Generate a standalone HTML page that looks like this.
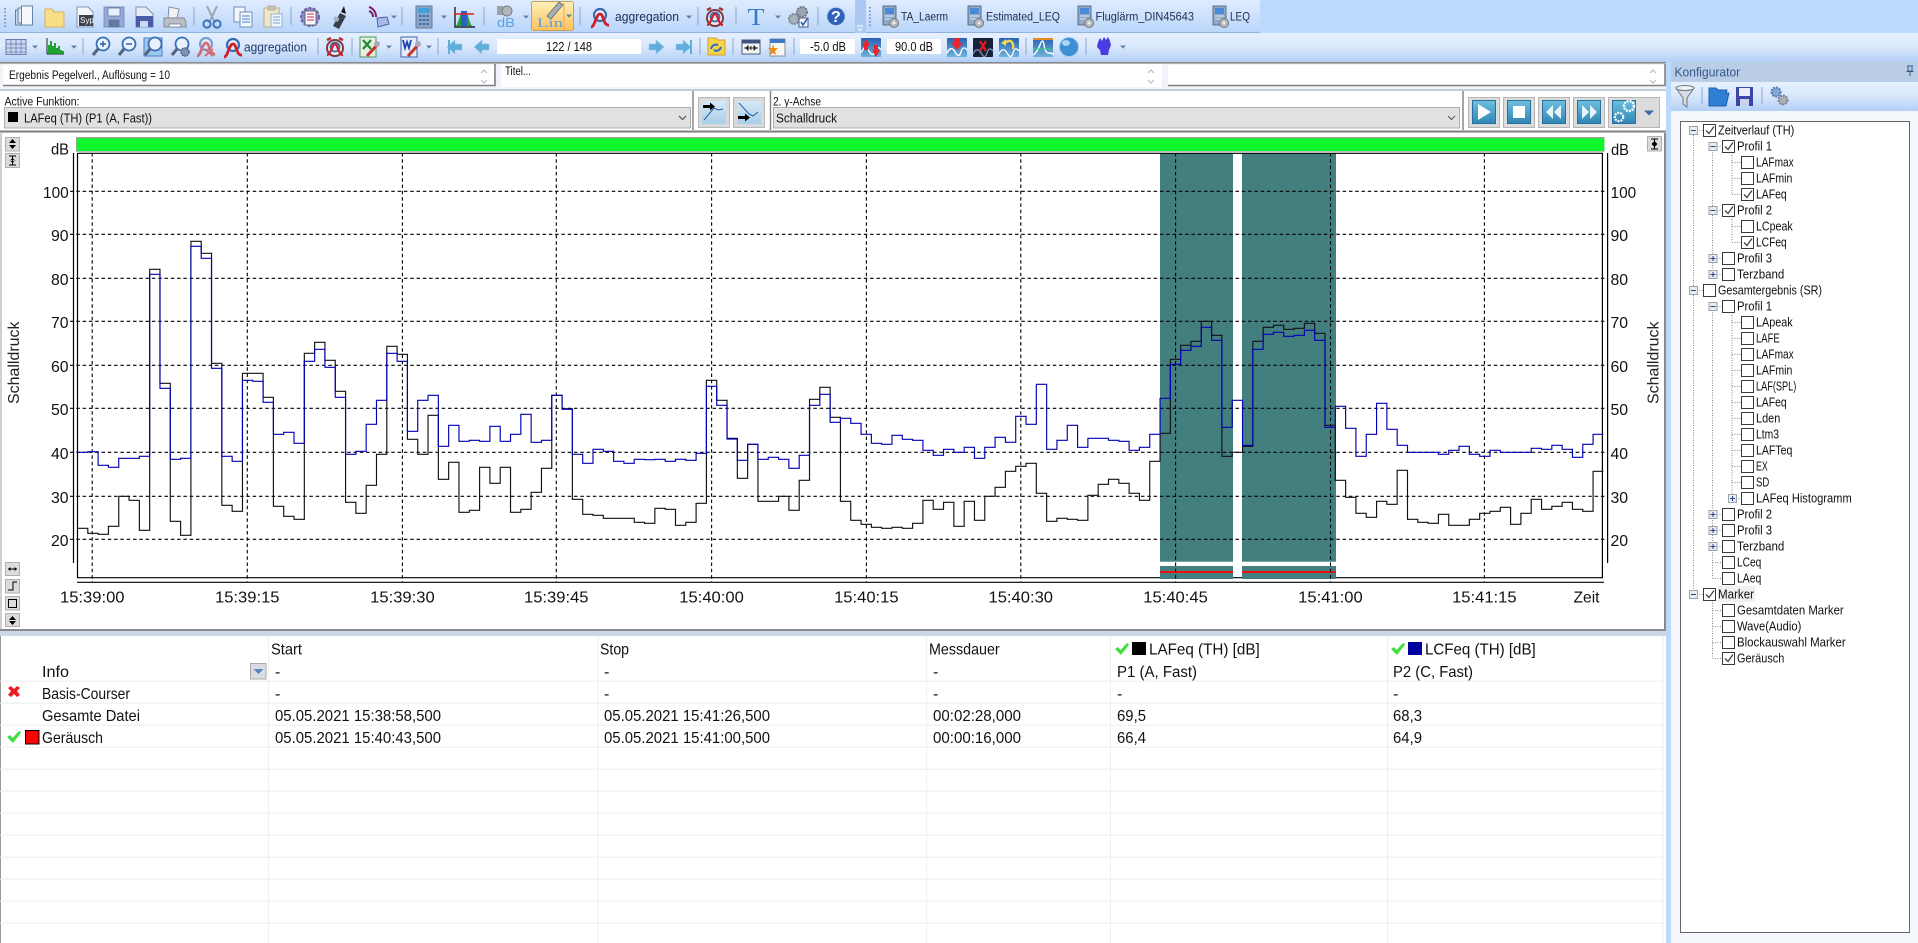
<!DOCTYPE html>
<html lang="de">
<head>
<meta charset="utf-8">
<title>Messdaten-Analyse</title>
<style>
html,body{margin:0;padding:0;width:1918px;height:943px;overflow:hidden;background:#fff}
svg{display:block;font-family:"Liberation Sans",sans-serif}
</style>
</head>
<body>
<svg width="1918" height="943" viewBox="0 0 1918 943" xmlns="http://www.w3.org/2000/svg">
<defs>
<linearGradient id="g1" x1="0" y1="0" x2="0" y2="1"><stop offset="0" stop-color="#e0ecfe"/><stop offset="1" stop-color="#b9d5fa"/></linearGradient>
<linearGradient id="g2" x1="0" y1="0" x2="0" y2="1"><stop offset="0" stop-color="#e6f0fe"/><stop offset=".45" stop-color="#dbe9fd"/><stop offset="1" stop-color="#b3cff6"/></linearGradient>
<linearGradient id="go" x1="0" y1="0" x2="0" y2="1"><stop offset="0" stop-color="#fff0b8"/><stop offset="1" stop-color="#fbc25e"/></linearGradient>
<linearGradient id="gb" x1="0" y1="0" x2="0" y2="1"><stop offset="0" stop-color="#6cc0de"/><stop offset="1" stop-color="#2f86b6"/></linearGradient>
<linearGradient id="gt" x1="0" y1="0" x2="0" y2="1"><stop offset="0" stop-color="#d6e8f7"/><stop offset="1" stop-color="#a8cfe9"/></linearGradient>
<linearGradient id="gw" x1="0" y1="0" x2="0" y2="1"><stop offset="0" stop-color="#2a62b4"/><stop offset="1" stop-color="#6fb2dc"/></linearGradient>
<g id="dd"><path d="M-3-1.5h6l-3 3.2z" fill="#6580a8"/></g>
<g id="ag"><circle cx="0" cy="-3" r="6" fill="#e4eefb" stroke="#3a6cb2" stroke-width="2.2"/><path d="M-9 9C-5 9-4-4 0-4S3 8 9 7" fill="none" stroke="#cf1f2a" stroke-width="2.8"/></g>
<g id="al"><circle cx="0" cy="1" r="8" fill="#f3eeea" stroke="#7d3a42" stroke-width="2"/><path d="M-8-7l4-2M8-7l-4-2" stroke="#a33" stroke-width="2.4"/><circle cx="0" cy="0" r="4.500" fill="#dfe9f6" stroke="#3a6fb4" stroke-width="1.800"/><path d="M-8 8C-4 8-3-3 0-3S3 8 8 8" fill="none" stroke="#d0202a" stroke-width="2.200"/></g>
<g id="dv"><rect x="-7" y="-11" width="13" height="19" fill="#8fa9c8" stroke="#5b6f88"/><rect x="-5" y="-9" width="9" height="6" fill="#4b8ad6"/><path d="M-5-1h9M-5 2h9" stroke="#dde6f1"/><circle cx="4" cy="6" r="4.500" fill="#b4b8bc" stroke="#777"/><circle cx="4" cy="6" r="1.500" fill="#eee"/></g>
<g id="mg"><circle cx="2" cy="-3" r="6.500" fill="#e8f1fc" stroke="#3a6fb0" stroke-width="1.800"/><path d="M-3 2l-5 6" stroke="#54627a" stroke-width="3"/></g>
<g id="al2"><path d="M-8 0l8-7v4h7v6h-7v4z" fill="#62aeda" stroke="#8cc4e6" stroke-width=".5"/></g>
<g id="ar2"><path d="M8 0l-8-7v4h-7v6h7v4z" fill="#62aeda" stroke="#8cc4e6" stroke-width=".5"/></g>
<g id="cb"><rect x=".5" y="-5.500" width="12" height="12" fill="#fff" stroke="#3a3a3a"/></g>
<g id="cc"><rect x=".5" y="-5.500" width="12" height="12" fill="#fff" stroke="#3a3a3a"/><path d="M3 .5l3 3 5-7" fill="none" stroke="#444" stroke-width="1.300"/></g>
<g id="mn"><rect x=".5" y="-3.500" width="8" height="8" fill="#e9edf2" stroke="#9aa3ad"/><path d="M2 .5h5" stroke="#2a3f86"/></g>
<g id="pl"><rect x=".5" y="-3.500" width="8" height="8" fill="#e9edf2" stroke="#9aa3ad"/><path d="M2 .5h5M4.500-2v5" stroke="#2a3f86"/></g>
<g id="ck"><path d="M-7 0l3-2 2.500 3L5-6l2.200 1.500L-1 6z" fill="#3fe03f"/></g>
</defs>

<!-- toolbars -->
<rect x="0" y="0" width="1918" height="33" fill="#bdd9fc"/>
<rect x="0" y="0" width="855" height="33" fill="url(#g1)"/>
<rect x="855" y="0" width="11" height="33" fill="#abc9f2"/>
<rect x="866" y="0" width="394" height="33" fill="url(#g1)"/>
<path d="M0 32.500h855M866 32.500h394" stroke="#8fb2de"/>
<rect x="0" y="33" width="1918" height="29" fill="url(#g2)"/>
<path d="M5 8v20M870 7v20" stroke="#5f83b4" stroke-dasharray="1.500 2" stroke-width="1.500"/>
<path d="M194 7v18M291 7v18M402 7v18M484 7v18M580 7v18M698 7v18M736 7v18M818 7v18M83 38v17M318 38v17M352 38v17M438 38v17M700 38v17M733 38v17M794 38v17M1026 38v17M1086 38v17" stroke="#8aa7cc"/>
<g stroke="#5f7c9f" stroke-width=".8">
<g transform="translate(24.500,17)" stroke="#4a6a94"><rect x="-9" y="-7" width="11" height="15" fill="#c8d8ef"/><rect x="-6.500" y="-9" width="11" height="15" fill="#dde8f8"/><rect x="-3" y="-11" width="11" height="19" fill="#f5f8fd"/></g>
<path d="M45 9h7l2 3h10v15H45z" fill="#f8df86" stroke="#d5a63c"/>
<g transform="translate(85,17)"><path d="M-8-10h11l5 5v15H-8z" fill="#f4f6fa"/><rect x="-6" y="-2" width="14" height="11" fill="#3a424e" stroke="none"/><text x="-5" y="6" font-size="8" fill="#fff" stroke="none">Syp</text></g>
<g transform="translate(114,17)"><rect x="-10" y="-10" width="20" height="20" fill="#98a8d8" stroke="#7384b8"/><rect x="-6" y="-9" width="12" height="8" fill="#eaeefa"/><rect x="-5" y="3" width="10" height="7" fill="#66789f"/></g>
<g transform="translate(145,17)"><path d="M-9-10h10l7 7v13H-9z" fill="#e8ecf8"/><rect x="-9" y="-1" width="17" height="11" fill="#4a5aa6" stroke="none"/><rect x="-5" y="4" width="8" height="6" fill="#cdd6ee" stroke="none"/></g>
<g transform="translate(175,17)"><path d="M-6-10l10 2-2 9H-7z" fill="#f1f1f1"/><path d="M-11 1h20l2 4v5h-22z" fill="#bcc0c4" stroke="#777"/><rect x="-6" y="7" width="12" height="3" fill="#fff"/></g>
</g>
<g transform="translate(212,17)" fill="none"><path d="M-5-11L3 6M5-11L-3 6" stroke="#9aa5b2" stroke-width="2"/><circle cx="-5" cy="7" r="3.600" stroke="#3d73bb" stroke-width="2"/><circle cx="5" cy="7" r="3.600" stroke="#3d73bb" stroke-width="2"/></g>
<g transform="translate(243,17)" stroke="#6f8db3" fill="#f3f7fd"><rect x="-9" y="-10" width="11" height="15"/><rect x="-3" y="-5" width="12" height="15"/><path d="M-1-1h8M-1 2h8M-1 5h8" stroke="#3f83d6"/></g>
<g transform="translate(273,17)" stroke="#b5ad92"><rect x="-9" y="-9" width="15" height="19" fill="#efe7c8"/><rect x="-5" y="-11" width="7" height="4" fill="#c9c3ae"/><rect x="-2" y="-3" width="11" height="13" fill="#f1f6fd" stroke="#9bb2cf"/><path d="M0 0h7M0 3h7M0 6h7" stroke="#6fa1d8"/></g>
<g transform="translate(310,17)"><circle r="9" fill="#8c88c8" stroke="#6a66a6" stroke-dasharray="3 1.500" stroke-width="2"/><rect x="-5" y="-6" width="11" height="14" fill="#fbfbff" stroke="#667"/><path d="M-3-3h7M-3 0h7M-3 3h7" stroke="#d24"/></g>
<g transform="translate(339,17)"><path d="M1-4l6 3-7 13-6-3z" fill="#3a3f47"/><path d="M5-11l2 8-5-2z" fill="#15181d"/><rect x="-4" y="1" width="5" height="4" transform="rotate(25)" fill="#9fb3c6"/></g>
<g transform="translate(378,17)"><path d="M-9-10a10 10 0 0 1 7 10M-9-6a6 6 0 0 1 4 6" fill="none" stroke="#7b1f6c" stroke-width="2"/><path d="M-1 1l10-1 2 7-11 3z" fill="#a8b8ea" stroke="#535fa0"/></g>
<use href="#dd" x="394" y="17"/>
<g transform="translate(424,17)"><rect x="-8" y="-11" width="16" height="22" fill="#8ca6c8" stroke="#64789a"/><rect x="-6" y="-9" width="12" height="5" fill="#44a0d8"/><path d="M-5-1h10M-5 3h10M-5 7h10" stroke="#3d6fa8" stroke-width="2" stroke-dasharray="2.500 1.200"/></g>
<use href="#dd" x="444" y="17"/>
<g transform="translate(464,17)"><path d="M-9 9C-5 9-5-6 0-6S5 9 9 9z" fill="#1ea33a"/><rect x="-3" y="-6" width="6" height="15" fill="#2b5fc4"/><path d="M-9-10V10H11" fill="none" stroke="#222" stroke-width="1.400"/><path d="M-10-3H10" stroke="#d22" stroke-width="1.400"/></g>
<g transform="translate(505,17)"><rect x="-8" y="-11" width="6" height="9" fill="#9aa2ab"/><circle cx="2" cy="-6" r="5" fill="#b2b7bd" stroke="#767d85"/><text x="-8" y="10" font-size="13" fill="#5ba2e2" textLength="18" lengthAdjust="spacingAndGlyphs">dB</text></g>
<use href="#dd" x="526" y="17"/>
<rect x="531.500" y="1.500" width="42" height="29" rx="2" fill="url(#go)" stroke="#c7a35a"/>
<path d="M564 3v27" stroke="#e6a84a"/>
<g transform="translate(551,15)"><path d="M8-13l4 3L0 4l-4-3z" fill="#a7adb4" stroke="#666" stroke-width=".8"/></g>
<text x="537" y="27" font-size="13" font-family="Liberation Serif" fill="#58a2e4" textLength="26" lengthAdjust="spacingAndGlyphs">Lin</text>
<use href="#dd" x="569" y="16" />
<use href="#ag" x="600" y="18"/>
<text x="615" y="21" font-size="12.500" fill="#1c2c55" textLength="64" lengthAdjust="spacingAndGlyphs">aggregation</text>
<use href="#dd" x="689" y="17"/>
<use href="#al" x="715" y="17"/>
<text x="747.500" y="25" font-size="24" font-family="Liberation Serif" fill="#3a78c8" textLength="17" lengthAdjust="spacingAndGlyphs">T</text>
<use href="#dd" x="778" y="17"/>
<g transform="translate(799,17)"><circle cx="3" cy="-5" r="5" fill="#9aa4b0" stroke="#6f7a86" stroke-dasharray="2 1" stroke-width="2"/><circle cx="-5" cy="2" r="5" fill="#a8b2bd" stroke="#7a8592" stroke-dasharray="2 1" stroke-width="2"/><rect x="0" y="1" width="9" height="9" fill="#f4f7fb" stroke="#557"/><path d="M2 5l2 3 4-6" fill="none" stroke="#2566b8" stroke-width="1.600"/></g>
<circle cx="836" cy="16.500" r="9.500" fill="#2f62b8" stroke="#c6d8f2" stroke-width="1.600"/>
<text x="831" y="22" font-size="16" font-weight="bold" fill="#fff">?</text>
<path d="M857 26h6M858 28.500l2 2 2-2" stroke="#fff" fill="none"/>
<use href="#dv" x="890" y="17"/><text x="901" y="20.500" font-size="11.500" fill="#1f2d4f" textLength="47" lengthAdjust="spacingAndGlyphs">TA_Laerm</text>
<use href="#dv" x="975" y="17"/><text x="986" y="20.500" font-size="11.500" fill="#1f2d4f" textLength="74" lengthAdjust="spacingAndGlyphs">Estimated_LEQ</text>
<use href="#dv" x="1085" y="17"/><text x="1095.500" y="20.500" font-size="11.500" fill="#1f2d4f" textLength="98.500" lengthAdjust="spacingAndGlyphs">Fluglärm_DIN45643</text>
<use href="#dv" x="1220" y="17"/><text x="1230" y="20.500" font-size="11.500" fill="#1f2d4f" textLength="20" lengthAdjust="spacingAndGlyphs">LEQ</text>

<!-- row 2 -->
<g transform="translate(16,47)"><rect x="-10" y="-7.500" width="20" height="15" fill="#c9d7f0" stroke="#6a7cab"/><path d="M-5-7v15M0-7v15M5-7v15M-10-3h20M-10 1h20M-10 5h20" stroke="#7e8dbc"/></g>
<use href="#dd" x="35" y="47"/>
<g transform="translate(55,47)"><path d="M-8 7V-9M-8 7H9" stroke="#222"/><path d="M-6 7v-9M-4 7v-13M-2 7v-8M0 7v-11M2 7v-6M4 7v-8M6 7v-4M8 7v-3" stroke="#0b9c1a" stroke-width="1.800"/></g>
<use href="#dd" x="74" y="47"/>
<g transform="translate(101,47)"><use href="#mg"/><path d="M-1-3h6M2-6v6" stroke="#2a5ea8" stroke-width="1.400"/></g>
<g transform="translate(127,47)"><use href="#mg"/><path d="M-1-3h6" stroke="#2a5ea8" stroke-width="1.400"/></g>
<g transform="translate(153,47)"><rect x="-9" y="-9" width="18" height="18" fill="#9cc8ee" stroke="#4a7ec0"/><use href="#mg"/></g>
<g transform="translate(180,47)"><use href="#mg"/><circle cx="5" cy="5" r="4" fill="#7c94b6" stroke="#4a6084" stroke-dasharray="1.600 1" stroke-width="1.600"/></g>
<g transform="translate(206,47)" opacity=".6"><use href="#ag"/><path d="M-1 2l8 7M7 2l-8 7" stroke="#d22" stroke-width="2"/></g>
<use href="#ag" x="233" y="48"/>
<text x="244" y="51.500" font-size="12.500" fill="#24376a" textLength="63" lengthAdjust="spacingAndGlyphs">aggregation</text>
<use href="#al" x="335" y="47"/>
<g transform="translate(369,47)"><rect x="-9" y="-10" width="16" height="20" fill="#e4efe2" stroke="#4a9a52"/><path d="M-6-7l8 9M2-7l-8 9" stroke="#1e8a33" stroke-width="2.200"/><path d="M9-3L-2 9" stroke="#c8332a" stroke-width="3"/><circle cx="8" cy="-3" r="3" fill="#aab"/></g>
<use href="#dd" x="389" y="47"/>
<g transform="translate(410,47)"><rect x="-9" y="-10" width="16" height="20" fill="#e5ecfa" stroke="#3f62b4"/><path d="M-7-7l2 8 2-6 2 6 2-8" fill="none" stroke="#1f46b0" stroke-width="1.800"/><path d="M9-3L-2 9" stroke="#c8332a" stroke-width="3"/><circle cx="8" cy="-3" r="3" fill="#aab"/></g>
<use href="#dd" x="429" y="47"/>
<use href="#al2" x="455" y="47"/><rect x="448" y="40" width="2" height="14" fill="#62aeda"/><use href="#al2" x="482" y="47"/>
<rect x="497" y="39" width="144" height="15" fill="#fff"/>
<text x="546" y="51" font-size="13" fill="#111" textLength="46" lengthAdjust="spacingAndGlyphs">122 / 148</text>
<use href="#ar2" x="656" y="47"/><use href="#ar2" x="683" y="47"/><rect x="690" y="40" width="2" height="14" fill="#62aeda"/>
<g transform="translate(716,47)"><path d="M-8-9h8l2 2h7v15H-8z" fill="#f6d24a" stroke="#cfa42c"/><path d="M-5 2c1-4 4-5 7-4M5 0c-1 3-4 5-7 3" fill="none" stroke="#2f6bc6" stroke-width="2"/></g>
<g transform="translate(751,47)"><rect x="-9" y="-7" width="18" height="14" fill="#f6f6f2" stroke="#45587c"/><rect x="-9" y="-7" width="18" height="3.500" fill="#3d557f"/><path d="M-7 1h14M-5 1l2-2v4zM0 1v-2v4M5 1l-2-2v4z" stroke="#222" fill="#222"/></g>
<g transform="translate(777,47)"><rect x="-7" y="-8" width="15" height="17" fill="#f8f7ef" stroke="#7f8ea8"/><rect x="-7" y="-8" width="15" height="4" fill="#3f78c4"/><path d="M-4-3l1 4 4 0-3 3 1 4-3-2-3 2 1-4-3-3 4 0z" fill="#f08a16"/></g>
<rect x="800" y="39" width="55" height="15" fill="#fff"/>
<text x="810" y="51" font-size="13" fill="#111" textLength="36" lengthAdjust="spacingAndGlyphs">-5.0 dB</text>
<g transform="translate(871,47)"><rect x="-10" y="-9" width="20" height="19" rx="1" fill="url(#gw)"/><path d="M-10 6q4-9 8-2t6 0 6-1" fill="none" stroke="#fff" stroke-width="1.300"/><path d="M-9-1l4-7 4 7h-2v4h-4v-4zM1 3l4 7 4-7H7v-5H3v5z" fill="#e8242c"/></g>
<rect x="887" y="39" width="54" height="15" fill="#fff"/>
<text x="895" y="51" font-size="13" fill="#111" textLength="38" lengthAdjust="spacingAndGlyphs">90.0 dB</text>
<g transform="translate(957,47)"><rect x="-10" y="-9" width="20" height="19" rx="1" fill="url(#gw)"/><path d="M-10 6q4-8 8-1t6 0 6-2" fill="none" stroke="#fff" stroke-width="1.400"/><path d="M-3-9h6v5h3l-6 7-6-7h3z" fill="#e8242c"/></g>
<g transform="translate(983,47)"><rect x="-10" y="-9" width="20" height="19" rx="1" fill="#152238"/><path d="M-10 7q4-8 8-1t6 0 6-2" fill="none" stroke="#7f8fae" stroke-width="1.300"/><path d="M-3-6l6 10M3-6l-6 10" stroke="#e01c22" stroke-width="2.200"/></g>
<g transform="translate(1009,47)"><rect x="-10" y="-9" width="20" height="19" rx="1" fill="url(#gw)"/><path d="M-10 7q4-8 8-1t6 0 6-2" fill="none" stroke="#fff" stroke-width="1.300"/><path d="M-4-4c6-5 9 0 8 6" fill="none" stroke="#f2d84c" stroke-width="2.400"/><path d="M-8-4l5-4v7z" fill="#f2d84c"/></g>
<g transform="translate(1043,47)"><rect x="-10" y="-9" width="20" height="19" fill="url(#gw)"/><path d="M-10-8h20" stroke="#e88a1e" stroke-width="2"/><path d="M-10 8q4-2 7-10t4 0 5 8 4 2" fill="none" stroke="#fff" stroke-width="1.400"/><path d="M-10 2h20" stroke="#30d070"/></g>
<circle cx="1069" cy="47" r="9.500" fill="#3f8fd6" stroke="#a3c8ea"/><ellipse cx="1066" cy="43" rx="4" ry="3" fill="#a9d7f6"/>
<path d="M1098 42l2-4 2 3 2-4 2 3 2-3 2 4 1 4-2 5-1 5h-7l-1-5-3-3z" fill="#4a3ce0"/>
<use href="#dd" x="1123" y="47"/>

<!-- row 3 -->
<rect x="0" y="62" width="1666" height="71" fill="#f0f3f8"/>
<rect x="0" y="62" width="1666" height="1.600" fill="#8a8a8a"/>
<rect x="3" y="65" width="491" height="20" fill="#fff"/>
<path d="M3 85.500h492V64" fill="none" stroke="#808080" stroke-width="1.600"/>
<rect x="501" y="64" width="661" height="23" fill="#fff"/>
<rect x="1168" y="65" width="497" height="20" fill="#fff"/>
<path d="M1168 85.500h497V64" fill="none" stroke="#808080" stroke-width="1.600"/>
<text x="9" y="79" font-size="11.500" fill="#111" textLength="161" lengthAdjust="spacingAndGlyphs">Ergebnis Pegelverl., Auflösung = 10</text>
<text x="505" y="75" font-size="11.500" fill="#111" textLength="26" lengthAdjust="spacingAndGlyphs">Titel...</text>
<g fill="none" stroke="#b5bcc6" stroke-width="1.200"><path d="M481 73l3-3 3 3M481 80l3 3 3-3M1148 73l3-3 3 3M1148 80l3 3 3-3M1650 73l3-3 3 3M1650 80l3 3 3-3"/></g>
<rect x="0" y="89" width="1666" height="2" fill="#c4ccd8"/>
<!-- row 4 -->
<rect x="0" y="91" width="1666" height="40" fill="#fff"/>
<rect x="0" y="130.500" width="1666" height="2" fill="#808080"/>
<text x="4.500" y="105.500" font-size="11.500" fill="#111" textLength="75" lengthAdjust="spacingAndGlyphs">Active Funktion:</text>
<rect x="4.500" y="107.500" width="686" height="20.500" fill="#e1e1e1" stroke="#adadad"/>
<rect x="8" y="112" width="10" height="10" fill="#000"/>
<text x="24" y="122.500" font-size="13" fill="#111" textLength="128" lengthAdjust="spacingAndGlyphs">LAFeq (TH) (P1 (A, Fast))</text>
<path d="M679 116l3.500 3.500 3.500-3.500M1448 116l3.500 3.500 3.500-3.500" fill="none" stroke="#555"/>
<path d="M693 91v39M770.500 91v39M1463 91v39" stroke="#808080" stroke-width="1.400"/>
<rect x="698.500" y="97.500" width="31" height="30" fill="#dadada" stroke="#b8b8b8"/><rect x="702" y="101" width="24" height="23" fill="url(#gt)"/>
<path d="M704 120l10-12 4 2 5-1" fill="none" stroke="#2a5ea8"/><path d="M703 105h7v-2.500l5 4-5 4V108h-7z" fill="#000"/>
<rect x="733.500" y="97.500" width="31" height="30" fill="#dadada" stroke="#b8b8b8"/><rect x="737" y="101" width="24" height="23" fill="url(#gt)"/>
<path d="M739 103l10 11 4 2 5-4" fill="none" stroke="#2a5ea8"/><path d="M738 116h7v-2.500l5 4-5 4V119h-7z" fill="#000"/>
<text x="773" y="105.500" font-size="11.500" fill="#111" textLength="48" lengthAdjust="spacingAndGlyphs">2. y-Achse</text>
<rect x="773.500" y="107.500" width="686" height="20.500" fill="#e1e1e1" stroke="#adadad"/>
<text x="776" y="122.500" font-size="13" fill="#111" textLength="61" lengthAdjust="spacingAndGlyphs">Schalldruck</text>
<path d="M679 116l3.500 3.500 3.500-3.500M1448 116l3.500 3.500 3.500-3.500" fill="none" stroke="#555"/>
<g fill="#dcdcdc" stroke="#b5b5b5"><rect x="1468.500" y="97.500" width="31" height="30"/><rect x="1503.500" y="97.500" width="31" height="30"/><rect x="1538.500" y="97.500" width="31" height="30"/><rect x="1573.500" y="97.500" width="31" height="30"/><rect x="1608.500" y="97.500" width="51" height="30"/></g>
<g fill="url(#gb)" stroke="#2a6e9e"><rect x="1472.500" y="100.500" width="23" height="23"/><rect x="1507.500" y="100.500" width="23" height="23"/><rect x="1542.500" y="100.500" width="23" height="23"/><rect x="1577.500" y="100.500" width="23" height="23"/><rect x="1612.500" y="100.500" width="23" height="23"/></g>
<path d="M1478 104l13 8-13 8z" fill="#fff"/><rect x="1513" y="106" width="12" height="12" fill="#fff"/>
<path d="M1553 105l-7 7 7 7zM1561 105l-7 7 7 7zM1582 105l7 7-7 7zM1590 105l7 7-7 7z" fill="#e8f4fb"/>
<circle cx="1629" cy="106" r="5" fill="none" stroke="#fff" stroke-width="2.400" stroke-dasharray="2 1"/><circle cx="1619" cy="117" r="4.200" fill="none" stroke="#fff" stroke-width="2.200" stroke-dasharray="2 1"/>
<path d="M1644 110.500h10l-5 5z" fill="#3f68a8"/>

<!-- chart panel -->
<rect x="0" y="133" width="2" height="497" fill="#cfcfcf"/>
<rect x="76" y="137" width="1528.500" height="14.700" fill="#a0a0a0"/>
<rect x="76.800" y="138.300" width="1527.500" height="12.700" fill="#0cf72c"/>
<rect x="1160" y="153" width="73" height="408.700" fill="#437f7f"/>
<rect x="1242" y="153" width="94" height="408.700" fill="#437f7f"/>
<g stroke="#000" stroke-width="1.200" fill="none">
<path d="M77.500 153.300H1603M77.500 153V577.700H1602.400V153M73.500 153V563M1607.600 153V563M77 582.300H1604"/>
</g>
<rect x="1160" y="566" width="73" height="13" fill="#437f7f"/>
<rect x="1242" y="566" width="94" height="13" fill="#437f7f"/>
<rect x="1160" y="571" width="73" height="2" fill="#f01010"/>
<rect x="1242" y="571" width="94" height="2" fill="#f01010"/>
<g stroke="#000" stroke-width="1.100" stroke-dasharray="3.500 2.800" fill="none">
<path d="M92.200 153V582M247.300 153V582M402.400 153V582M556.300 153V582M711.600 153V582M866.400 153V582M1020.800 153V582M1175.600 153V582M1330.500 153V582M1484.400 153V582"/>
<path d="M70 191.300H1607M70 234.300H1607M70 278.300H1607M70 321.300H1607M70 365.300H1607M70 408.300H1607M70 452.300H1607M70 496.300H1607M70 539.300H1607"/>
</g>
<path fill="none" stroke="#111" stroke-width="1.150" d="M77.500 528.300h10.310V533.300h10.310V534.300h10.310V526.300h10.310V496.300h10.310V500.300h10.310V530.300h10.310V269.300h10.310V383.300h10.310V521.300h10.310V535.300h10.310V241.300h10.310V253.300h10.310V363.300h10.310V505.300h10.310V511.300h10.310V373.300h10.310V373.300h10.310V397.300h10.310V506.300h10.310V516.300h10.310V519.300h10.310V353.300h10.310V342.300h10.310V360.300h10.310V391.300h10.310V502.300h10.310V513.300h10.310V485.300h10.310V454.300h10.310V346.300h10.310V354.300h10.310V439.300h10.310V454.300h10.310V415.300h10.310V479.300h10.310V462.300h10.310V512.300h10.310V510.300h10.310V467.300h10.310V483.300h10.310V467.300h10.310V512.300h10.310V509.300h10.310V492.300h10.310V468.300h10.310V395.300h10.310V408.700h10.310V499.300h10.310V514.300h10.310V515.300h10.310V518.300h10.310V518.300h10.310V518.300h10.310V522.300h10.310V523.300h10.310V508.300h10.310V509.300h10.310V525.300h10.310V522.300h10.310V503.300h10.310V380.300h10.310V400.300h10.310V438.300h10.310V478.300h10.310V444.300h10.310V501.300h10.310V501.300h10.310V496.300h10.310V510.300h10.310V480.300h10.310V399.300h10.310V387.300h10.310V417.300h10.310V501.300h10.310V520.300h10.310V524.300h10.310V527.300h10.310V528.300h10.310V527.300h10.310V528.300h10.310V523.300h10.310V500.300h10.310V509.300h10.310V502.300h10.310V526.300h10.310V501.300h10.310V520.300h10.310V496.300h10.310V487.300h10.310V471.300h10.310V466.300h10.310V463.300h10.310V493.300h10.310V521.300h10.310V518.300h10.310V519.300h10.310V520.300h10.310V495.300h10.310V484.300h10.310V479.300h10.310V483.300h10.310V493.300h10.310V500.300h10.310V461.300h10.310V433.300h10.310V359.300h10.310V345.300h10.310V341.300h10.310V321.300h10.310V335.300h10.310V456.300h10.310V452.300h10.310V446.300h10.310V341.300h10.310V327.300h10.310V325.300h10.310V329.300h10.310V328.300h10.310V323.300h10.310V333.300h10.310V425.300h10.310V480.300h10.310V497.300h10.310V513.300h10.310V517.300h10.310V501.300h10.310V504.300h10.310V470.300h10.310V519.300h10.310V522.300h10.310V523.300h10.310V514.300h10.310V525.300h10.310V525.300h10.310V519.300h10.310V513.300h10.310V511.300h10.310V507.300h10.310V524.300h10.310V513.300h10.310V499.300h10.310V509.300h10.310V506.300h10.310V502.300h10.310V509.300h10.310V511.300h10.310V471.300h10.310"/>
<path fill="none" stroke="#0000b4" stroke-width="1.150" d="M77.500 452.300h10.310V451.700h10.310V465.300h10.310V467.300h10.310V458.300h10.310V458.300h10.310V456.300h10.310V274.300h10.310V388.300h10.310V459.300h10.310V458.300h10.310V246.300h10.310V258.300h10.310V368.300h10.310V456.300h10.310V461.300h10.310V380.300h10.310V381.300h10.310V402.300h10.310V434.300h10.310V432.300h10.310V443.300h10.310V361.300h10.310V349.300h10.310V367.300h10.310V397.300h10.310V454.300h10.310V451.300h10.310V424.300h10.310V400.300h10.310V353.300h10.310V361.300h10.310V431.300h10.310V400.300h10.310V395.300h10.310V446.300h10.310V425.300h10.310V441.300h10.310V440.300h10.310V441.300h10.310V426.300h10.310V441.300h10.310V434.300h10.310V414.300h10.310V442.300h10.310V440.300h10.310V395.300h10.310V409.300h10.310V454.300h10.310V463.300h10.310V449.300h10.310V451.300h10.310V461.300h10.310V463.300h10.310V459.300h10.310V459.700h10.310V459.300h10.310V461.300h10.310V459.300h10.310V460.300h10.310V453.300h10.310V386.300h10.310V405.300h10.310V439h10.310V460.300h10.310V444.300h10.310V459.300h10.310V457.300h10.310V459.300h10.310V468.300h10.310V455.300h10.310V405.300h10.310V394.300h10.310V422.300h10.310V418.300h10.310V423.300h10.310V434.300h10.310V443.300h10.310V444.300h10.310V435.300h10.310V439.300h10.310V440.300h10.310V450.300h10.310V455.300h10.310V449.300h10.310V452.300h10.310V447.300h10.310V458.300h10.310V447.300h10.310V437.300h10.310V442.300h10.310V416.300h10.310V424.300h10.310V384.300h10.310V449.300h10.310V440.300h10.310V425.300h10.310V447.300h10.310V438.300h10.310V438.300h10.310V440.300h10.310V441.300h10.310V450.300h10.310V447.300h10.310V434.300h10.310V398.300h10.310V364.300h10.310V350.300h10.310V346.300h10.310V327.300h10.310V340.300h10.310V427.300h10.310V400.300h10.310V445.300h10.310V349.300h10.310V334.300h10.310V332.300h10.310V336.300h10.310V335.300h10.310V330.300h10.310V340.300h10.310V427.300h10.310V406.300h10.310V428.300h10.310V456.300h10.310V434.300h10.310V403.300h10.310V429.300h10.310V445.300h10.310V452.300h10.310V452.300h10.310V452.300h10.310V454.300h10.310V450.300h10.310V446.300h10.310V454.300h10.310V456.300h10.310V450.300h10.310V452.300h10.310V452.300h10.310V452.300h10.310V448.300h10.310V449.300h10.310V445.300h10.310V449.300h10.310V457.300h10.310V444.300h10.310V434.300h10.310"/>

<!-- chart labels -->
<g font-size="16" fill="#111">
<text x="51" y="154.500" textLength="18" lengthAdjust="spacingAndGlyphs">dB</text>
<text x="1611" y="155" textLength="18" lengthAdjust="spacingAndGlyphs">dB</text>
<text x="43" y="197.800" textLength="25.700" lengthAdjust="spacingAndGlyphs">100</text>
<text x="51" y="240.800" textLength="17.600" lengthAdjust="spacingAndGlyphs">90</text>
<text x="51" y="284.800" textLength="17.600" lengthAdjust="spacingAndGlyphs">80</text>
<text x="51" y="327.800" textLength="17.600" lengthAdjust="spacingAndGlyphs">70</text>
<text x="51" y="371.800" textLength="17.600" lengthAdjust="spacingAndGlyphs">60</text>
<text x="51" y="414.800" textLength="17.600" lengthAdjust="spacingAndGlyphs">50</text>
<text x="51" y="458.800" textLength="17.600" lengthAdjust="spacingAndGlyphs">40</text>
<text x="51" y="502.800" textLength="17.600" lengthAdjust="spacingAndGlyphs">30</text>
<text x="51" y="545.800" textLength="17.600" lengthAdjust="spacingAndGlyphs">20</text>
<text x="1610.500" y="197.800" textLength="25.700" lengthAdjust="spacingAndGlyphs">100</text>
<text x="1610.500" y="240.800" textLength="17.600" lengthAdjust="spacingAndGlyphs">90</text>
<text x="1610.500" y="284.800" textLength="17.600" lengthAdjust="spacingAndGlyphs">80</text>
<text x="1610.500" y="327.800" textLength="17.600" lengthAdjust="spacingAndGlyphs">70</text>
<text x="1610.500" y="371.800" textLength="17.600" lengthAdjust="spacingAndGlyphs">60</text>
<text x="1610.500" y="414.800" textLength="17.600" lengthAdjust="spacingAndGlyphs">50</text>
<text x="1610.500" y="458.800" textLength="17.600" lengthAdjust="spacingAndGlyphs">40</text>
<text x="1610.500" y="502.800" textLength="17.600" lengthAdjust="spacingAndGlyphs">30</text>
<text x="1610.500" y="545.800" textLength="17.600" lengthAdjust="spacingAndGlyphs">20</text>
<text x="60" y="602.600" textLength="64.500" lengthAdjust="spacingAndGlyphs">15:39:00</text>
<text x="215" y="602.600" textLength="64.500" lengthAdjust="spacingAndGlyphs">15:39:15</text>
<text x="370.200" y="602.600" textLength="64.500" lengthAdjust="spacingAndGlyphs">15:39:30</text>
<text x="524" y="602.600" textLength="64.500" lengthAdjust="spacingAndGlyphs">15:39:45</text>
<text x="679.300" y="602.600" textLength="64.500" lengthAdjust="spacingAndGlyphs">15:40:00</text>
<text x="834.100" y="602.600" textLength="64.500" lengthAdjust="spacingAndGlyphs">15:40:15</text>
<text x="988.500" y="602.600" textLength="64.500" lengthAdjust="spacingAndGlyphs">15:40:30</text>
<text x="1143.300" y="602.600" textLength="64.500" lengthAdjust="spacingAndGlyphs">15:40:45</text>
<text x="1298.200" y="602.600" textLength="64.500" lengthAdjust="spacingAndGlyphs">15:41:00</text>
<text x="1452.100" y="602.600" textLength="64.500" lengthAdjust="spacingAndGlyphs">15:41:15</text>
<text x="1573.500" y="602.600" textLength="26" lengthAdjust="spacingAndGlyphs">Zeit</text>
<text transform="translate(19,404) rotate(-90)" font-size="15.500" fill="#222" textLength="82.500" lengthAdjust="spacingAndGlyphs">Schalldruck</text>
<text transform="translate(1658.500,404) rotate(-90)" font-size="15.500" fill="#222" textLength="82.500" lengthAdjust="spacingAndGlyphs">Schalldruck</text>
</g>
<!-- chart small buttons -->
<g fill="#dcdcdc" stroke="#b0b0b0">
<rect x="5.500" y="137.500" width="14" height="13.500"/><rect x="5.500" y="153.500" width="14" height="14"/>
<rect x="5.500" y="562.500" width="14" height="13"/><rect x="5.500" y="579.500" width="14" height="13.500"/><rect x="5.500" y="596.500" width="14" height="13.500"/><rect x="5.500" y="613.500" width="14" height="13"/>
<rect x="1647.500" y="136.500" width="14" height="14.500"/>
</g>
<path d="M12.500 139l3.500 4h-7zM12.500 149l3.500-4h-7zM12.500 158l3 3h-6zM12.500 163l3-3h-6zM12.500 616l3.500 4h-7zM12.500 625l3.500-4h-7zM1654.500 141l3 3h-6zM1654.500 147l3-3h-6z" fill="#000"/>
<path d="M9 156h7M9 165h7M1651 139h7M1651 149h7M12.500 156v9M1654.500 139v10M8 569h9M8 590h5v-8h4" stroke="#000" fill="none"/>
<path d="M8 569l2.500-2v4zM17 569l-2.500-2v4z" fill="#000"/>
<rect x="8.500" y="599.500" width="8" height="8" fill="none" stroke="#000"/>

<!-- separators below chart -->
<rect x="0" y="629" width="1666" height="2" fill="#8a8a8a"/>
<rect x="0" y="631" width="1666" height="5" fill="#ccd7e6"/>
<rect x="1664" y="133" width="2" height="498" fill="#8a8a8a"/>
<!-- table -->
<rect x="0" y="636" width="1664" height="307" fill="#fff"/>
<rect x="0" y="636" width="1" height="307" fill="#999"/>
<path d="M268.600 636V943M598 636V943M926.600 636V943M1110.500 636V943M1387.500 636V943M1663 636V943M0 681.300H1663M0 703.300H1663M0 725.300H1663M0 747.300H1663M0 769.300H1663M0 791.300H1663M0 813.300H1663M0 835.300H1663M0 857.300H1663M0 879.300H1663M0 901.300H1663M0 923.300H1663" stroke="#eeeeee"/>
<rect x="250.500" y="663.500" width="15.500" height="15.500" fill="#d9dde3" stroke="#a9a9a9"/><path d="M253.500 669h10l-5 5z" fill="#5a84bc"/>
<g font-size="16" fill="#111">
<text x="271" y="654.500" textLength="31" lengthAdjust="spacingAndGlyphs">Start</text>
<text x="600" y="654.500" textLength="29" lengthAdjust="spacingAndGlyphs">Stop</text>
<text x="929" y="654.500" textLength="70.700" lengthAdjust="spacingAndGlyphs">Messdauer</text>
<text x="1149" y="654.500" textLength="110.700" lengthAdjust="spacingAndGlyphs">LAFeq (TH) [dB]</text>
<text x="1425" y="654.500" textLength="110.700" lengthAdjust="spacingAndGlyphs">LCFeq (TH) [dB]</text>
<text x="42" y="677" textLength="27" lengthAdjust="spacingAndGlyphs">Info</text>
<text x="275" y="677">-</text><text x="604" y="677">-</text><text x="933" y="677">-</text>
<text x="1117" y="677" textLength="80" lengthAdjust="spacingAndGlyphs">P1 (A, Fast)</text>
<text x="1393" y="677" textLength="80" lengthAdjust="spacingAndGlyphs">P2 (C, Fast)</text>
<text x="42" y="699" textLength="88" lengthAdjust="spacingAndGlyphs">Basis-Courser</text>
<text x="275" y="699">-</text><text x="604" y="699">-</text><text x="933" y="699">-</text><text x="1117" y="699">-</text><text x="1393" y="699">-</text>
<text x="42" y="721" textLength="98" lengthAdjust="spacingAndGlyphs">Gesamte Datei</text>
<text x="275" y="721" textLength="166" lengthAdjust="spacingAndGlyphs">05.05.2021 15:38:58,500</text>
<text x="604" y="721" textLength="166" lengthAdjust="spacingAndGlyphs">05.05.2021 15:41:26,500</text>
<text x="933" y="721" textLength="88" lengthAdjust="spacingAndGlyphs">00:02:28,000</text>
<text x="1117" y="721" textLength="29" lengthAdjust="spacingAndGlyphs">69,5</text>
<text x="1393" y="721" textLength="29" lengthAdjust="spacingAndGlyphs">68,3</text>
<text x="42" y="743" textLength="61" lengthAdjust="spacingAndGlyphs">Geräusch</text>
<text x="275" y="743" textLength="166" lengthAdjust="spacingAndGlyphs">05.05.2021 15:40:43,500</text>
<text x="604" y="743" textLength="166" lengthAdjust="spacingAndGlyphs">05.05.2021 15:41:00,500</text>
<text x="933" y="743" textLength="88" lengthAdjust="spacingAndGlyphs">00:00:16,000</text>
<text x="1117" y="743" textLength="29" lengthAdjust="spacingAndGlyphs">66,4</text>
<text x="1393" y="743" textLength="29" lengthAdjust="spacingAndGlyphs">64,9</text>
</g>
<path d="M8 688l3-2 3 3 3-3 3 2-3 3 3 4-3 2-3-3-3 3-3-2 3-4z" fill="#ee1c25"/>
<use href="#ck" x="14" y="737"/>
<rect x="25.500" y="730.500" width="13.500" height="13.500" fill="#f00" stroke="#000"/>
<use href="#ck" x="1122" y="649"/><rect x="1132" y="642" width="14" height="13" fill="#000"/>
<use href="#ck" x="1398" y="649"/><rect x="1408" y="642" width="14" height="13" fill="#00009c"/>

<!-- side panel -->
<rect x="1666" y="62" width="252" height="881" fill="#bcd8fb"/>
<rect x="1671" y="111" width="247" height="832" fill="#f4f7fc"/>
<rect x="1671" y="62" width="247" height="20" fill="#b9cde6"/>
<rect x="1671" y="82" width="247" height="29" fill="url(#g2)"/>
<text x="1674.500" y="76.500" font-size="12.500" fill="#34598c" textLength="65.700" lengthAdjust="spacingAndGlyphs">Konfigurator</text>
<path d="M1907 66h6M1908 66v5h4v-5M1906.500 71.500h7M1910 72v4" stroke="#34598c" fill="none"/>
<path d="M1702 87v17M1762 87v17" stroke="#8aa7cc"/>
<g transform="translate(1685,96)"><path d="M-9-8h18L2 2v9l-4-3V2z" fill="#d8dce2" stroke="#6f7680"/><ellipse cy="-8" rx="9" ry="2.500" fill="#eef1f5" stroke="#6f7680"/></g>
<path d="M1709 88h7l2 2h9l-1 3h3l-3 13h-17z" fill="#2f7fd6" stroke="#1d5ea8"/>
<rect x="1736" y="87" width="17" height="19" fill="#3a46a8"/><rect x="1739" y="88" width="11" height="8" fill="#e8ecf8"/><rect x="1740" y="99" width="9" height="7" fill="#cdd3ea"/>
<circle cx="1776" cy="92" r="4.500" fill="#8aa7cc" stroke="#4a7cc0" stroke-width="2" stroke-dasharray="2 1"/><circle cx="1783" cy="100" r="4.500" fill="#aab0b8" stroke="#7f858d" stroke-width="2" stroke-dasharray="2 1"/>

<!-- tree -->
<rect x="1680.500" y="121.500" width="229" height="811" fill="#fff" stroke="#666"/>
<rect x="1718" y="586" width="37" height="16" fill="#f0f0f0"/>
<path stroke="#888" stroke-dasharray="1 1.500" fill="none" d="M1693.500 135V590M1712.500 150V274M1712.500 310V578M1712.500 598V658M1732 150V194M1732 214V242M1732 310V494M1697 130.500h6M1697 290.500h6M1697 594.500h6M1717 146.500h5M1717 210.500h5M1717 258.500h5M1717 274.500h5M1717 306.500h5M1717 514.500h5M1717 530.500h5M1717 546.500h5M1712.500 562.500h9M1712.500 578.500h9M1712.500 610.500h9M1712.500 626.500h9M1712.500 642.500h9M1712.500 658.500h9M1732 162.500h9M1732 178.500h9M1732 194.500h9M1732 226.500h9M1732 242.500h9M1732 322.500h9M1732 338.500h9M1732 354.500h9M1732 370.500h9M1732 386.500h9M1732 402.500h9M1732 418.500h9M1732 434.500h9M1732 450.500h9M1732 466.500h9M1732 482.500h9M1736 498.500h5"/>
<use href="#mn" x="1689" y="130"/><use href="#cc" x="1703" y="130"/>
<use href="#mn" x="1708.500" y="146"/><use href="#cc" x="1722" y="146"/>
<use href="#cb" x="1741" y="162"/><use href="#cb" x="1741" y="178"/><use href="#cc" x="1741" y="194"/>
<use href="#mn" x="1708.500" y="210"/><use href="#cc" x="1722" y="210"/>
<use href="#cb" x="1741" y="226"/><use href="#cc" x="1741" y="242"/>
<use href="#pl" x="1708.500" y="258"/><use href="#cb" x="1722" y="258"/>
<use href="#pl" x="1708.500" y="274"/><use href="#cb" x="1722" y="274"/>
<use href="#mn" x="1689" y="290"/><use href="#cb" x="1703" y="290"/>
<use href="#mn" x="1708.500" y="306"/><use href="#cb" x="1722" y="306"/>
<use href="#cb" x="1741" y="322"/><use href="#cb" x="1741" y="338"/><use href="#cb" x="1741" y="354"/><use href="#cb" x="1741" y="370"/><use href="#cb" x="1741" y="386"/><use href="#cb" x="1741" y="402"/><use href="#cb" x="1741" y="418"/><use href="#cb" x="1741" y="434"/><use href="#cb" x="1741" y="450"/><use href="#cb" x="1741" y="466"/><use href="#cb" x="1741" y="482"/>
<use href="#pl" x="1728" y="498"/><use href="#cb" x="1741" y="498"/>
<use href="#pl" x="1708.500" y="514"/><use href="#cb" x="1722" y="514"/>
<use href="#pl" x="1708.500" y="530"/><use href="#cb" x="1722" y="530"/>
<use href="#pl" x="1708.500" y="546"/><use href="#cb" x="1722" y="546"/>
<use href="#cb" x="1722" y="562"/><use href="#cb" x="1722" y="578"/>
<use href="#mn" x="1689" y="594"/><use href="#cc" x="1703" y="594"/>
<use href="#cb" x="1722" y="610"/><use href="#cb" x="1722" y="626"/><use href="#cb" x="1722" y="642"/><use href="#cc" x="1722" y="658"/>
<g font-size="12.600" fill="#111">
<text x="1718" y="134.500" textLength="76.300" lengthAdjust="spacingAndGlyphs">Zeitverlauf (TH)</text>
<text x="1737" y="150.500" textLength="35" lengthAdjust="spacingAndGlyphs">Profil 1</text>
<text x="1756" y="166.500" textLength="37.700" lengthAdjust="spacingAndGlyphs">LAFmax</text>
<text x="1756" y="182.500" textLength="36.300" lengthAdjust="spacingAndGlyphs">LAFmin</text>
<text x="1756" y="198.500" textLength="30.700" lengthAdjust="spacingAndGlyphs">LAFeq</text>
<text x="1737" y="214.500" textLength="35" lengthAdjust="spacingAndGlyphs">Profil 2</text>
<text x="1756" y="230.500" textLength="36.700" lengthAdjust="spacingAndGlyphs">LCpeak</text>
<text x="1756" y="246.500" textLength="30.700" lengthAdjust="spacingAndGlyphs">LCFeq</text>
<text x="1737" y="262.500" textLength="35" lengthAdjust="spacingAndGlyphs">Profil 3</text>
<text x="1737" y="278.500" textLength="47.300" lengthAdjust="spacingAndGlyphs">Terzband</text>
<text x="1718" y="294.500" textLength="104" lengthAdjust="spacingAndGlyphs">Gesamtergebnis (SR)</text>
<text x="1737" y="310.500" textLength="35" lengthAdjust="spacingAndGlyphs">Profil 1</text>
<text x="1756" y="326.500" textLength="36.700" lengthAdjust="spacingAndGlyphs">LApeak</text>
<text x="1756" y="342.500" textLength="23.700" lengthAdjust="spacingAndGlyphs">LAFE</text>
<text x="1756" y="358.500" textLength="37.700" lengthAdjust="spacingAndGlyphs">LAFmax</text>
<text x="1756" y="374.500" textLength="36.300" lengthAdjust="spacingAndGlyphs">LAFmin</text>
<text x="1756" y="390.500" textLength="40.300" lengthAdjust="spacingAndGlyphs">LAF(SPL)</text>
<text x="1756" y="406.500" textLength="30.700" lengthAdjust="spacingAndGlyphs">LAFeq</text>
<text x="1756" y="422.500" textLength="24.300" lengthAdjust="spacingAndGlyphs">Lden</text>
<text x="1756" y="438.500" textLength="23" lengthAdjust="spacingAndGlyphs">Ltm3</text>
<text x="1756" y="454.500" textLength="36.300" lengthAdjust="spacingAndGlyphs">LAFTeq</text>
<text x="1756" y="470.500" textLength="11.700" lengthAdjust="spacingAndGlyphs">EX</text>
<text x="1756" y="486.500" textLength="13.300" lengthAdjust="spacingAndGlyphs">SD</text>
<text x="1756" y="502.500" textLength="95.700" lengthAdjust="spacingAndGlyphs">LAFeq Histogramm</text>
<text x="1737" y="518.500" textLength="35" lengthAdjust="spacingAndGlyphs">Profil 2</text>
<text x="1737" y="534.500" textLength="35" lengthAdjust="spacingAndGlyphs">Profil 3</text>
<text x="1737" y="550.500" textLength="47.300" lengthAdjust="spacingAndGlyphs">Terzband</text>
<text x="1737" y="566.500" textLength="24.300" lengthAdjust="spacingAndGlyphs">LCeq</text>
<text x="1737" y="582.500" textLength="24.300" lengthAdjust="spacingAndGlyphs">LAeq</text>
<text x="1718" y="598.500" textLength="36" lengthAdjust="spacingAndGlyphs">Marker</text>
<text x="1737" y="614.500" textLength="106.700" lengthAdjust="spacingAndGlyphs">Gesamtdaten Marker</text>
<text x="1737" y="630.500" textLength="64.300" lengthAdjust="spacingAndGlyphs">Wave(Audio)</text>
<text x="1737" y="646.500" textLength="108.700" lengthAdjust="spacingAndGlyphs">Blockauswahl Marker</text>
<text x="1737" y="662.500" textLength="47.300" lengthAdjust="spacingAndGlyphs">Geräusch</text>
</g>
</svg>
</body>
</html>
